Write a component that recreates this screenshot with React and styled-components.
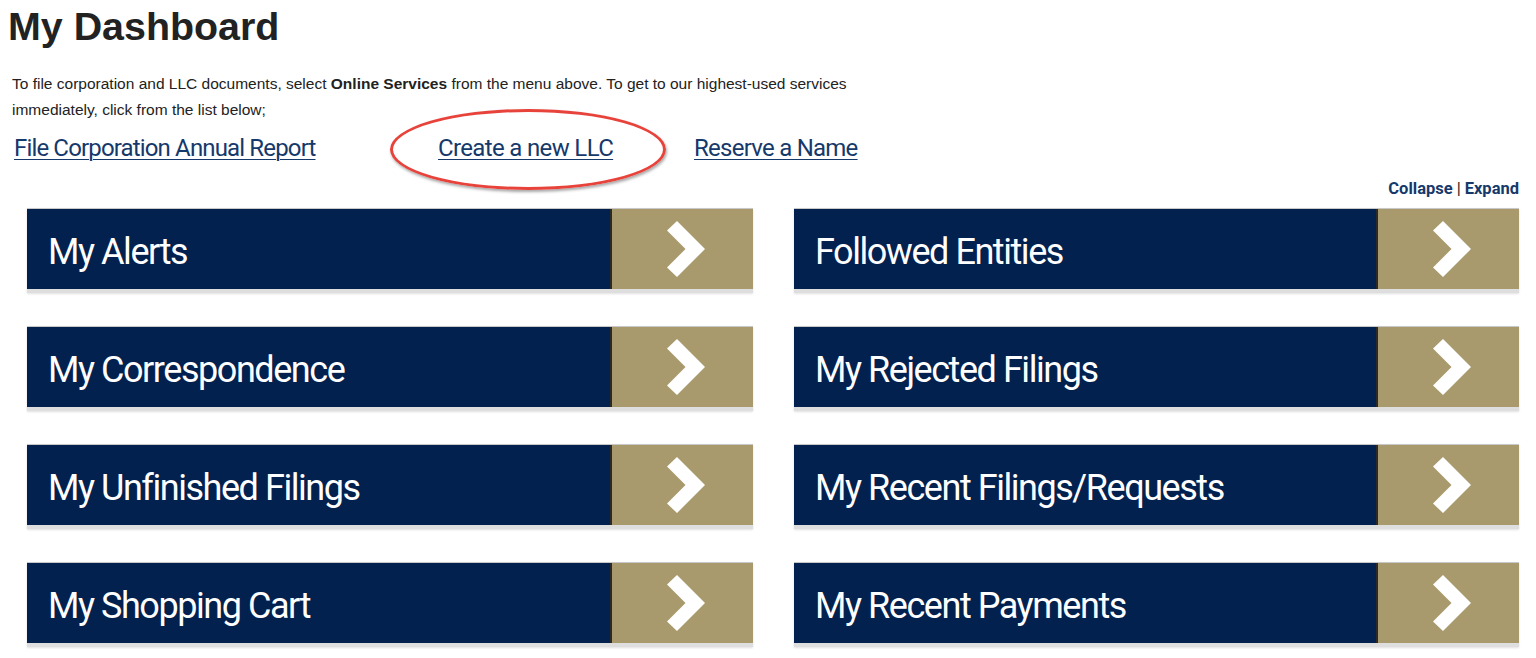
import React from "react";
import styled, { createGlobalStyle } from "styled-components";

const Global = createGlobalStyle`
  html, body { margin: 0; padding: 0; background: #fff; }
  body { font-family: "Liberation Sans", Arial, sans-serif; color: #222; }
`;

const Page = styled.div`
  width: 1536px;
  height: 658px;
  overflow: hidden;
  box-sizing: border-box;
  padding: 3px 0 0 0;
`;

const Title = styled.h1`
  margin: 0 0 0 8px;
  font-family: "Liberation Sans", Arial, sans-serif;
  font-weight: 700;
  font-size: 39.4px;
  line-height: 46px;
  color: #222;
`;

const Intro = styled.p`
  margin: 22px 0 0 12px;
  width: 850px;
  font-family: "Liberation Sans", Arial, sans-serif;
  font-size: 15.5px;
  line-height: 26px;
  color: #222;
  b { font-weight: 700; }
`;

const LinkRow = styled.div`
  display: grid;
  grid-template-columns: 424px 256px auto;
  align-items: baseline;
  margin: 7px 0 0 14px;
  height: 36px;
`;

const LinkSlot = styled.div`
  position: relative;
  justify-self: start;
`;

const QuickLink = styled.a`
  font-family: Roboto, "Liberation Sans", Arial, sans-serif;
  font-size: 24px;
  line-height: 36px;
  letter-spacing: ${(p) => p.$tracking}px;
  color: #16396b;
  text-decoration: underline;
  text-decoration-thickness: 1px;
  text-underline-offset: 3px;
  cursor: pointer;
`;

const Highlight = styled.div`
  position: absolute;
  left: -48px;
  right: -53px;
  top: -21px;
  bottom: -24px;
  border: 3px solid #e8433b;
  border-radius: 50%;
  box-shadow: 1px 2px 3px rgba(0, 0, 0, 0.35);
  pointer-events: none;
`;

const Board = styled.div`
  margin: 13px 17px 0 27px;
`;

const Toggle = styled.div`
  display: flex;
  justify-content: flex-end;
  font-family: Roboto, "Liberation Sans", Arial, sans-serif;
  font-weight: 700;
  font-size: 16.5px;
  line-height: 20px;
  color: #16396b;
  margin-bottom: 9px;
  span { color: #222; font-weight: 400; margin: 0 4px; }
  a { cursor: pointer; }
`;

const Grid = styled.div`
  display: grid;
  grid-template-columns: 726px 725px;
  column-gap: 41px;
  row-gap: 33px;
`;

const Card = styled.div`
  display: flex;
  height: 80px;
  border-top: 1px solid #c8c8c8;
  border-bottom: 4px solid #dedede;
  box-shadow: 0 1px 2px rgba(0, 0, 0, 0.12);
  cursor: pointer;
`;

const CardTitle = styled.div`
  flex: 1;
  display: flex;
  align-items: center;
  padding: 6px 0 0 21px;
  background: #03214f;
  color: #fff;
  font-family: Roboto, "Liberation Sans", Arial, sans-serif;
  font-size: 36px;
  letter-spacing: -1.45px;
`;

const CardArrow = styled.div`
  width: 143px;
  display: flex;
  align-items: center;
  justify-content: center;
  padding-left: 6px;
  box-sizing: border-box;
  background: #a99a6d;
  border-left: 2px solid #2b2a26;
`;

const Chevron = () => (
  <svg width="38" height="56" viewBox="0 0 38 56">
    <polygon points="10,0 0,9.5 18.5,28 0,46.5 10,56 38,28" fill="#fff" />
  </svg>
);

const panels = [
  "My Alerts",
  "Followed Entities",
  "My Correspondence",
  "My Rejected Filings",
  "My Unfinished Filings",
  "My Recent Filings/Requests",
  "My Shopping Cart",
  "My Recent Payments",
];

export default function App() {
  return (
    <Page>
      <Global />
      <Title>My Dashboard</Title>
      <Intro>
        To file corporation and LLC documents, select <b>Online Services</b> from the menu above. To get to
        our highest-used services immediately, click from the list below;
      </Intro>
      <LinkRow>
        <LinkSlot>
          <QuickLink $tracking={-0.85}>File Corporation Annual Report</QuickLink>
        </LinkSlot>
        <LinkSlot>
          <QuickLink $tracking={-0.65}>Create a new LLC</QuickLink>
          <Highlight />
        </LinkSlot>
        <LinkSlot>
          <QuickLink $tracking={-0.75}>Reserve a Name</QuickLink>
        </LinkSlot>
      </LinkRow>
      <Board>
        <Toggle>
          <a>Collapse</a>
          <span>|</span>
          <a>Expand</a>
        </Toggle>
        <Grid>
          {panels.map((p) => (
            <Card key={p}>
              <CardTitle>{p}</CardTitle>
              <CardArrow>
                <Chevron />
              </CardArrow>
            </Card>
          ))}
        </Grid>
      </Board>
    </Page>
  );
}
